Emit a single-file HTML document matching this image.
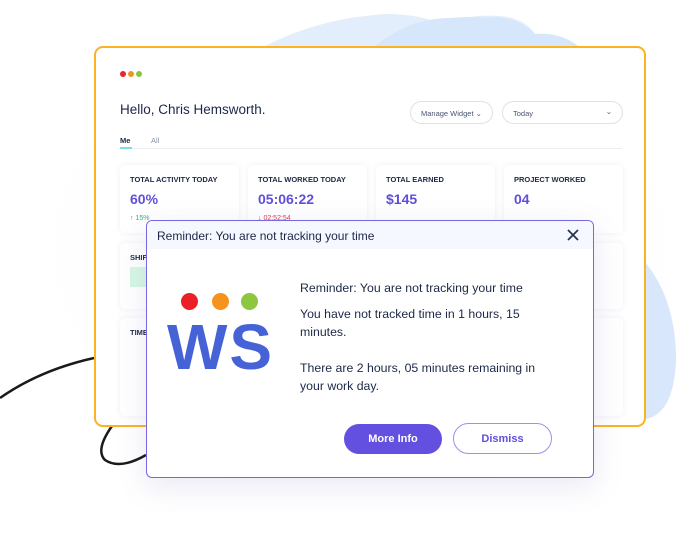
<!DOCTYPE html>
<html><head><style>
*{margin:0;padding:0;box-sizing:border-box}
body{width:700px;height:538px;background:#fff;font-family:"Liberation Sans",sans-serif;position:relative;overflow:hidden;color:#1c2848}
.abs{position:absolute}
.card{position:absolute;background:#fff;border-radius:5px;box-shadow:0 0 6px rgba(120,130,170,.12)}
.lab{position:absolute;left:10px;top:10px;font-size:7.5px;font-weight:bold;color:#1c2848}
.val{position:absolute;left:10px;top:26px;font-size:14px;font-weight:bold;color:#5f4fdc}
.pill{position:absolute;border:1px solid #dfe2ea;border-radius:12px;font-size:7.5px;color:#4a5570;padding:7px 10px}
</style></head><body>
<svg class="abs" style="left:0;top:0" width="700" height="538">
<defs><radialGradient id="g" cx="50%" cy="50%" r="50%"><stop offset="0" stop-color="#eceefb"/><stop offset="1" stop-color="#fff" stop-opacity="0"/></radialGradient></defs>
<ellipse cx="360" cy="250" rx="360" ry="260" fill="url(#g)"/>
<path d="M265 46 Q320 18 385 14 Q420 14 440 24 Q470 14 500 16 Q525 18 535 34 Q560 32 578 46 Z" fill="#e3eefc"/>
<path d="M375 46 Q410 18 450 18 Q470 16 485 18 Q515 14 535 34 Q560 32 578 46 Z" fill="#d6e6fb"/>
<path d="M594 235 Q630 230 645 262 Q676 300 676 360 Q674 418 640 420 L594 420 Z" fill="#d8e7fb"/>
<path d="M0 398 Q40 370 94 358" stroke="#1a1a1a" stroke-width="2.5" fill="none"/>
<path d="M112 426 Q95 450 105 460 Q120 470 146 455" stroke="#1a1a1a" stroke-width="2.5" fill="none"/>
</svg>
<div class="abs" style="left:94px;top:46px;width:552px;height:381px;border:2px solid #fbb321;border-radius:9px;background:#fff"></div>
<div class="abs" style="left:120px;top:71px;width:6px;height:6px;border-radius:3px;background:#e8262a"></div>
<div class="abs" style="left:128px;top:71px;width:6px;height:6px;border-radius:3px;background:#f39221"></div>
<div class="abs" style="left:136px;top:71px;width:6px;height:6px;border-radius:3px;background:#8cc43f"></div>
<div class="abs" style="left:120px;top:102px;font-size:13.5px">Hello, Chris Hemsworth.</div>
<div class="pill" style="left:410px;top:101px;width:83px;height:23px">Manage Widget ⌄</div>
<div class="pill" style="left:502px;top:101px;width:121px;height:23px">Today<span style="position:absolute;right:10px;top:5px">⌄</span></div>
<div class="abs" style="left:120px;top:136px;font-size:7.5px;font-weight:bold">Me</div>
<div class="abs" style="left:151px;top:136px;font-size:7.5px;color:#8a93a8">All</div>
<div class="abs" style="left:120px;top:148px;width:502px;height:1px;background:#eceef3"></div>
<div class="abs" style="left:120px;top:147px;width:12px;height:2px;background:#7fe0e0"></div>
<div class="card" style="left:120px;top:165px;width:119px;height:68px"><div class="lab">TOTAL ACTIVITY TODAY</div><div class="val">60%</div><div class="abs" style="left:10px;top:50px;font-size:7px;color:#2fb76a">↑ 15%</div></div>
<div class="card" style="left:248px;top:165px;width:119px;height:68px"><div class="lab">TOTAL WORKED TODAY</div><div class="val">05:06:22</div><div class="abs" style="left:10px;top:50px;font-size:7px;color:#e24040">↓ 02:52:54</div></div>
<div class="card" style="left:376px;top:165px;width:119px;height:68px"><div class="lab">TOTAL EARNED</div><div class="val">$145</div></div>
<div class="card" style="left:504px;top:165px;width:119px;height:68px"><div class="lab">PROJECT WORKED</div><div class="val">04</div></div>
<div class="card" style="left:120px;top:243px;width:119px;height:66px"><div class="lab">SHIFT</div><div class="abs" style="left:10px;top:24px;width:30px;height:20px;background:#d7f7e4"></div></div>
<div class="card" style="left:504px;top:243px;width:119px;height:66px"></div>
<div class="card" style="left:120px;top:318px;width:119px;height:98px"><div class="lab">TIME</div></div>
<div class="card" style="left:504px;top:318px;width:119px;height:98px"></div>
<div class="abs" style="left:146px;top:220px;width:448px;height:258px;border:1px solid #7868e0;border-radius:6px;background:#fff;box-shadow:0 8px 30px rgba(100,100,180,.15);overflow:hidden">
 <div style="height:28px;background:#f5f8fe;font-size:12px;padding:8px 10px;color:#1c2848">Reminder: You are not tracking your time</div>
 <svg class="abs" style="left:420px;top:8px" width="12" height="12"><path d="M1 1L11 11M11 1L1 11" stroke="#2a3350" stroke-width="1.8"/></svg>
 <div class="abs" style="left:34px;top:72px;width:17px;height:17px;border-radius:9px;background:#ec1f27"></div>
 <div class="abs" style="left:65px;top:72px;width:17px;height:17px;border-radius:9px;background:#f6921e"></div>
 <div class="abs" style="left:94px;top:72px;width:17px;height:17px;border-radius:9px;background:#8dc63f"></div>
 <div class="abs" style="left:20px;top:86px;font-size:64px;font-weight:bold;color:#4562d6;letter-spacing:2px;line-height:80px">WS</div>
 <div class="abs" style="left:153px;top:58px;width:248px;font-size:12.3px;line-height:18px;color:#1c2848">Reminder: You are not tracking your time<div style="margin-top:8px">You have not tracked time in 1 hours, 15 minutes.</div><div style="margin-top:18px">There are 2 hours, 05 minutes remaining in your work day.</div></div>
 <div class="abs" style="left:197px;top:203px;width:98px;height:30px;border-radius:15px;background:#6450e0;color:#fff;font-size:11px;font-weight:bold;text-align:center;line-height:30px">More Info</div>
 <div class="abs" style="left:306px;top:202px;width:99px;height:31px;border-radius:16px;border:1.5px solid #9c8ff0;color:#5f4fdc;font-size:11px;font-weight:bold;text-align:center;line-height:30px">Dismiss</div>
</div>
</body></html>
